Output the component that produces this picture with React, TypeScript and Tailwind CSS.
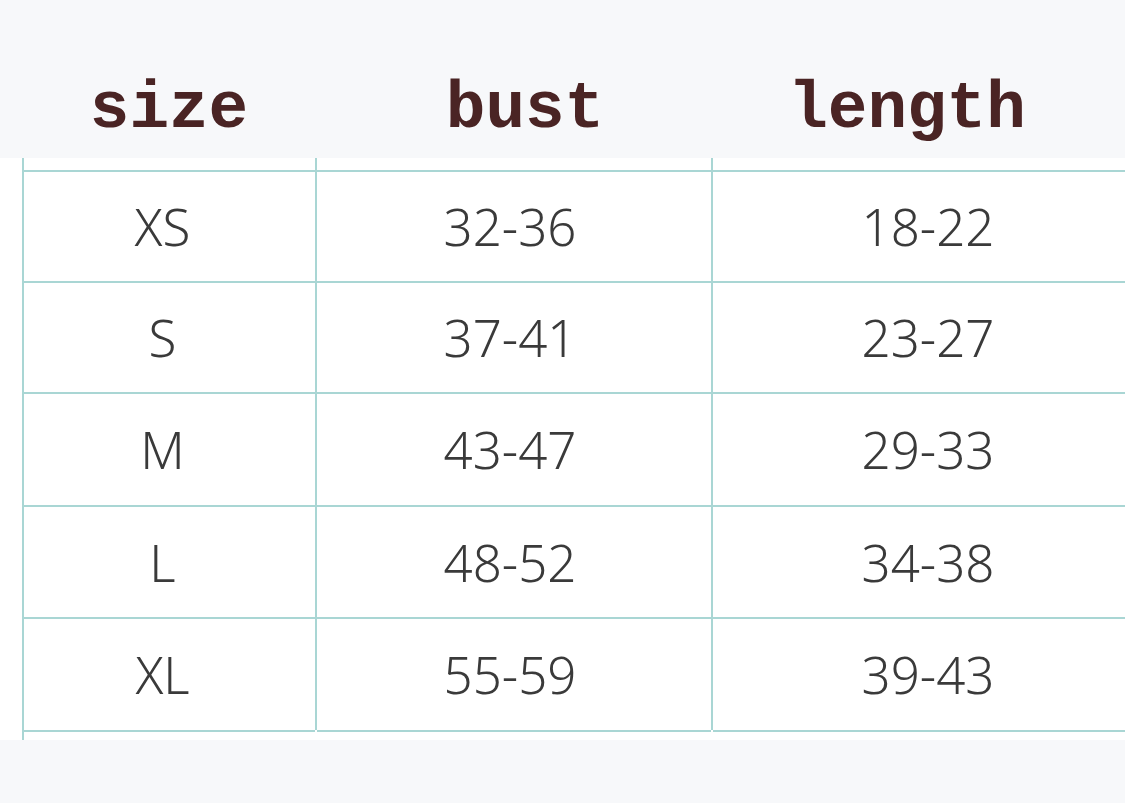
const rows = [
  { size: "XS", bust: "32-36", length: "18-22", h: "h-[111px]" },
  { size: "S", bust: "37-41", length: "23-27", h: "h-[111px]" },
  { size: "M", bust: "43-47", length: "29-33", h: "h-[113px]" },
  { size: "L", bust: "48-52", length: "34-38", h: "h-[112px]" },
  { size: "XL", bust: "55-59", length: "39-43", h: "h-[111px]" },
];

type Key = "size" | "bust" | "length";

const columns: { key: Key; width: string; border: string; pad: string }[] = [
  { key: "size", width: "w-[293px]", border: "border-r-2", pad: "pr-[14px]" },
  { key: "bust", width: "w-[396px]", border: "border-r-2", pad: "pr-[8px]" },
  { key: "length", width: "w-[430px]", border: "", pad: "" },
];

export default function App() {
  return (
    <div className="w-[1125px] h-[803px] overflow-hidden bg-[#f7f8fa] font-['Noto_Sans',sans-serif]">
      {/* Header labels */}
      <div className="h-[158px] flex items-end pb-[15px] font-['Liberation_Mono','Courier_New',monospace] font-bold text-[66px] leading-none text-[#4a2424]">
        <div className="w-[338px] text-center">size</div>
        <div className="w-[374px] text-center">bust</div>
        <div className="w-[390px] text-center">length</div>
      </div>

      {/* Table */}
      <div className="h-[582px] bg-white flex">
        <div className="w-[22px] shrink-0" />
        <div className="h-full border-l-2 border-[#a9d6d4] flex items-start">
          {columns.map((col) => (
            <div
              key={col.key}
              className={`${col.width} shrink-0 h-[572px] pt-[12px] border-[#a9d6d4] ${col.border}`}
            >
              {rows.map((r, i) => (
                <div
                  key={r.size}
                  className={`${r.h} ${col.pad} border-t-2 border-[#a9d6d4] flex items-center justify-center text-[51px] font-light text-[#3a3a3a] ${
                    i === rows.length - 1 ? "border-b-2 box-content" : ""
                  }`}
                >
                  {r[col.key]}
                </div>
              ))}
            </div>
          ))}
        </div>
      </div>
    </div>
  );
}
